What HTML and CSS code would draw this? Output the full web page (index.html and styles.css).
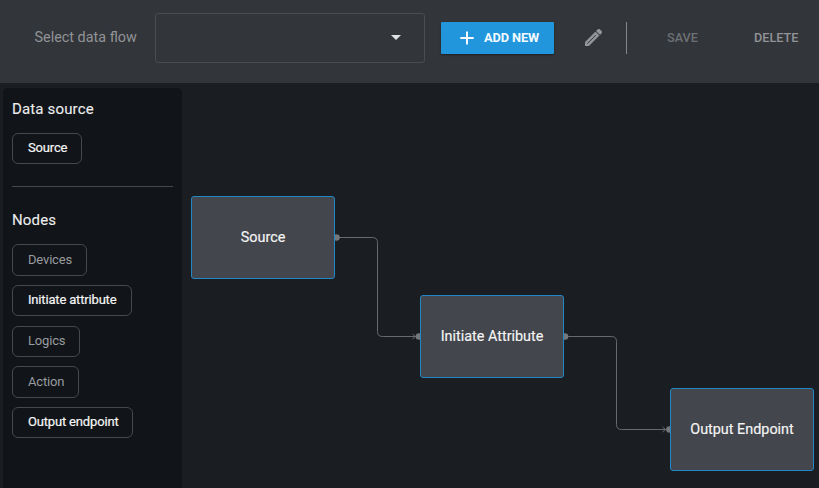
FILE: index.html
```html
<!DOCTYPE html>
<html lang="en">
<head>
<meta charset="utf-8">
<title>Data flow editor</title>
<link rel="stylesheet" href="styles.css">
</head>
<body>
<header class="toolbar">
  <label class="select-label">Select data flow</label>
  <div class="select" role="combobox"><span class="caret"></span></div>
  <button class="add"><svg class="plus" viewBox="0 0 14 14"><path d="M7 0.5V13.5M0.3 7H13.7"/></svg><span>ADD NEW</span></button>
  <button class="edit" aria-label="Edit"><svg viewBox="3 3 18 18"><path d="M14.06 9.02l.92.92L5.92 19H5v-.92l9.06-9.06M17.66 3c-.25 0-.51.1-.7.29l-1.83 1.83 3.75 3.75 1.83-1.83c.39-.39.39-1.02 0-1.41l-2.34-2.34c-.2-.2-.45-.29-.71-.29zm-3.6 3.19L3 17.25V21h3.75L17.81 9.94l-3.75-3.75z"/></svg></button>
  <span class="divider"></span>
  <button class="text-button save">SAVE</button>
  <button class="text-button delete">DELETE</button>
</header>
<main class="workspace">
  <aside class="palette">
    <h2>Data source</h2>
    <div class="chips"><span class="chip source">Source</span></div>
    <hr>
    <h2>Nodes</h2>
    <div class="chips">
      <span class="chip devices muted">Devices</span>
      <span class="chip initiate">Initiate attribute</span>
      <span class="chip logics muted">Logics</span>
      <span class="chip action muted">Action</span>
      <span class="chip output">Output endpoint</span>
    </div>
  </aside>
  <section class="canvas">
    <svg class="links" viewBox="182 83 637 405">
      <path d="M337 237.5H372.5Q377.5 237.5 377.5 242.5V331.5Q377.5 336.5 382.5 336.5H418"/>
      <path d="M565 336.5H611.5Q616.5 336.5 616.5 341.5V424.5Q616.5 429.5 621.5 429.5H668"/>
      <path d="M412.5 334L415.5 336.5L412.5 339M662.5 427L665.5 429.5L662.5 432"/>
      <g><circle cx="336.5" cy="237.5" r="3.3"/><circle cx="419" cy="336.5" r="3.3"/><circle cx="565" cy="336.5" r="3.3"/><circle cx="669.5" cy="429.5" r="3.3"/></g>
    </svg>
    <div class="node node-source">Source</div>
    <div class="node node-attribute">Initiate Attribute</div>
    <div class="node node-output">Output Endpoint</div>
  </section>
</main>
</body>
</html>
```
FILE: styles.css
```css
* { box-sizing: border-box; }
body {
  margin: 0;
  height: 488px;
  overflow: hidden;
  display: flex;
  flex-direction: column;
  background: #1a1d21;
  color: #f5f5f5;
  font-family: Roboto, "Liberation Sans", sans-serif;
}
button { border: 0; padding: 0; background: none; font: inherit; }
.toolbar {
  flex: 0 0 83px;
  display: flex;
  align-items: center;
  padding: 0 0 7px 34.5px;
  background: #323539;
}
.toolbar > * { flex: none; }
.select-label { width: 120.5px; font-size: 14.4px; color: #919397; white-space: nowrap; padding-bottom: 2px; }
.select {
  width: 270px;
  height: 50px;
  border: 1px solid #494c50;
  border-radius: 3px;
  display: flex;
  align-items: center;
  justify-content: flex-end;
  padding-right: 23px;
}
.caret { border: 5px solid transparent; border-top-color: #e0e1e2; border-bottom: 0; margin-top: -1px; }
.add {
  width: 113px;
  height: 32px;
  margin-left: 16px;
  padding: 0 0 1px 18.5px;
  display: flex;
  align-items: center;
  gap: 10.5px;
  background: #2196dc;
  border-radius: 1px;
  box-shadow: 0 1px 2px #0006;
  color: #f4faff;
  font-size: 12.8px;
  font-weight: 700;
  letter-spacing: -0.1px;
  white-space: nowrap;
}
.plus { width: 14px; height: 14px; flex: none; fill: none; stroke: currentColor; stroke-width: 2; }
.edit { width: 17px; height: 17px; margin: 0 0 2px 31px; }
.edit svg { display: block; width: 17px; height: 17px; fill: #96999d; stroke: #96999d; stroke-width: 0.7; }
.divider { width: 1px; height: 32px; margin-left: 24px; background: #83868a; }
.text-button { padding-bottom: 1px; font-size: 12.7px; font-weight: 500; text-align: left; color: #919397; }
.save { width: 32px; margin-left: 40px; color: #6d7074; }
.delete { width: 46px; margin-left: 55px; }
.workspace { flex: 1; display: flex; min-height: 0; }
.palette {
  width: 179px;
  margin: 5px 0 0 3px;
  padding: 12px 9px 0;
  border-radius: 5px 5px 0 0;
  background: #111418;
}
h2 { margin: 0; font-size: 15px; line-height: 18px; font-weight: 400; letter-spacing: 0.15px; color: #edeeee; -webkit-text-stroke: 0.1px; }
.chips { display: flex; flex-direction: column; align-items: flex-start; gap: 9.3px; padding-top: 15px; }
.chip {
  height: 31.4px;
  border: 1px solid #46494c;
  border-radius: 6px;
  padding-left: 15px;
  font-size: 13px;
  line-height: 28px;
  letter-spacing: -0.17px;
  color: #f5f5f5;
  white-space: nowrap;
  -webkit-text-stroke: 0.2px;
}
.muted { color: #989b9f; line-height: 29px; -webkit-text-stroke: 0; }
.source { width: 70px; }
.devices { width: 75px; }
.initiate { width: 120px; }
.logics { width: 68px; line-height: 28px; }
.action { width: 67px; }
.output { width: 121px; }
hr { margin: 21.6px 0 24px; border: 0; height: 1px; background: #46494c; }
hr + h2 + .chips { padding-top: 15.3px; }
.canvas { position: relative; flex: 1; }
.links { position: absolute; left: 0; top: 0; width: 637px; height: 405px; }
.links path { fill: none; stroke: #66696d; stroke-width: 1; }
.links circle { fill: #74777b; }
.node {
  position: absolute;
  width: 144px;
  height: 83px;
  border: 1px solid #2287c5;
  border-radius: 3px;
  background: #43474d;
  display: flex;
  align-items: center;
  justify-content: center;
  font-size: 14.4px;
  white-space: nowrap;
  -webkit-text-stroke: 0.15px;
}
.node-source { left: 9px; top: 113px; }
.node-attribute { left: 238px; top: 212px; }
.node-output { left: 488px; top: 305px; }
```
